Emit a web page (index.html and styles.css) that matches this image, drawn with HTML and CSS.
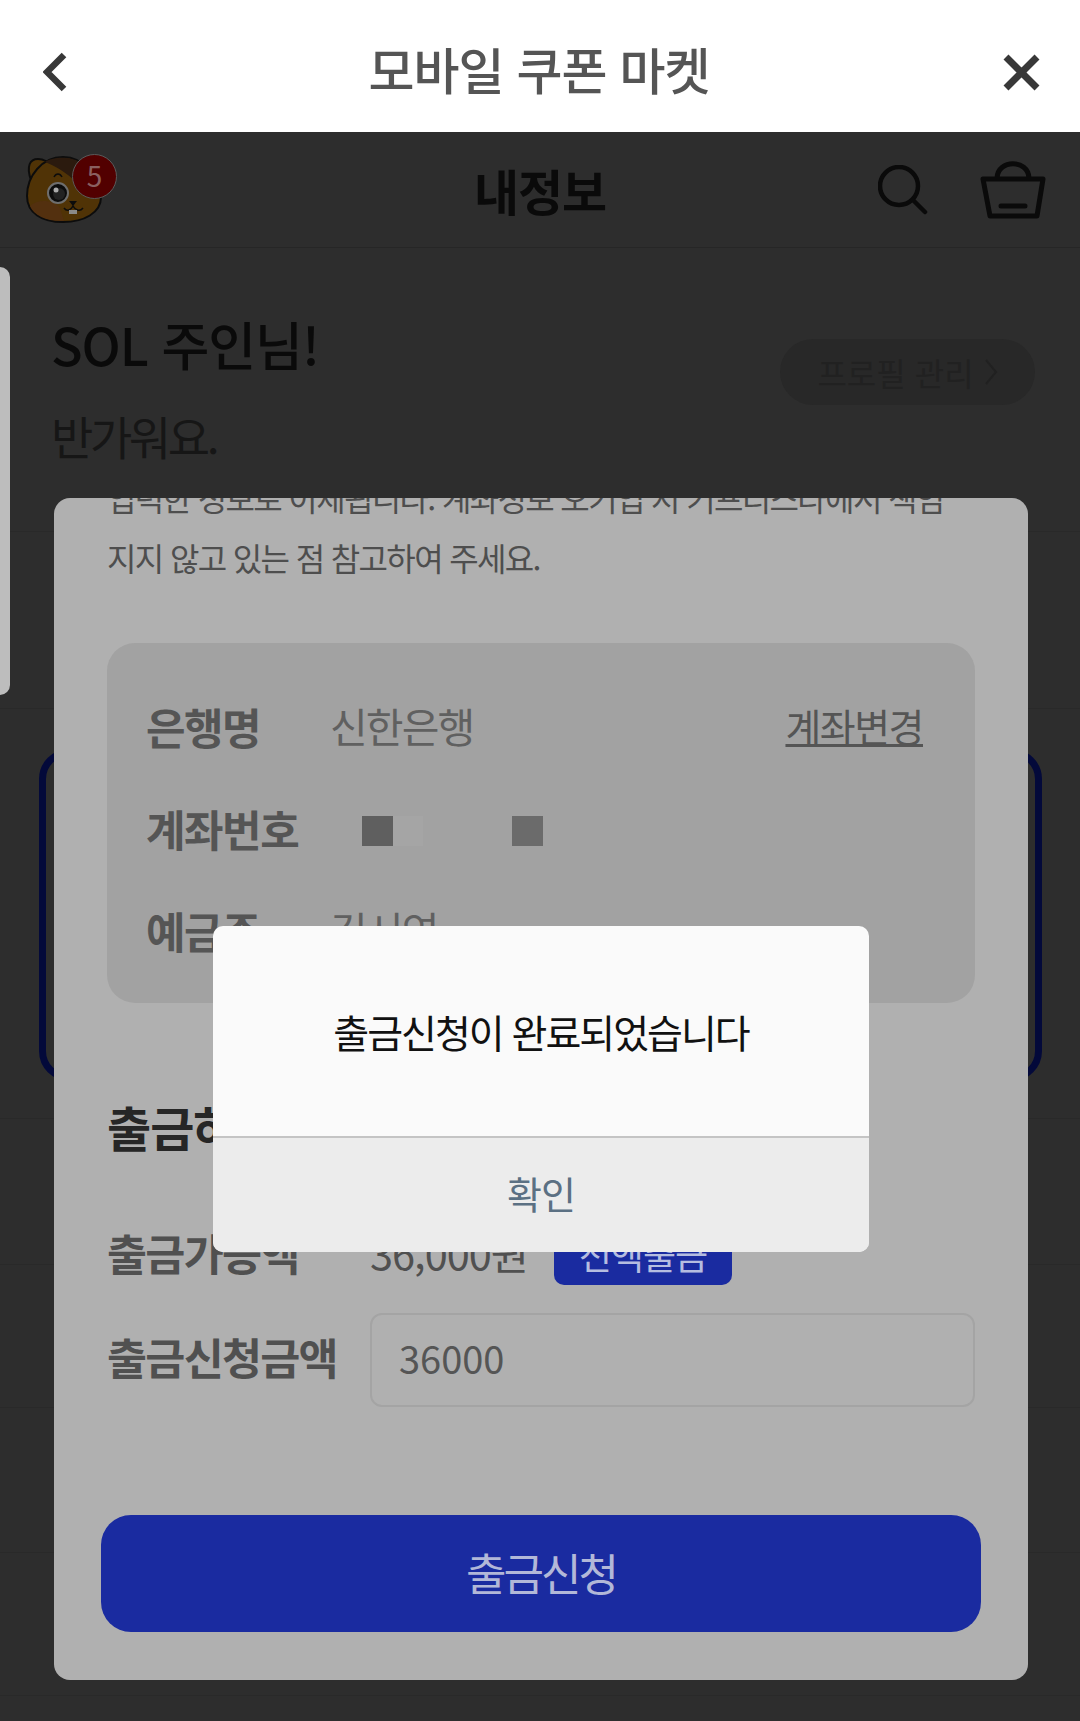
FILE: index.html
```html
<!DOCTYPE html>
<html lang="ko">
<head>
    <meta charset="UTF-8">
    <meta name="viewport" content="width=device-width, initial-scale=1.0">
    <title>모바일 쿠폰 마켓</title>
    <link rel="stylesheet" href="styles.css">
</head>
<body>
    <!-- 웹뷰 상단바 -->
    <div class="webview-bar">
        <svg class="back-icon" viewBox="0 0 24 40"><path d="M21 3 L4 20 L21 37" /></svg>
        <h1>모바일 쿠폰 마켓</h1>
        <svg class="close-icon" viewBox="0 0 37 37"><path d="M3 3 L34 34 M34 3 L3 34" /></svg>
    </div>

    <!-- 뒤에 깔린 페이지 -->
    <div class="page">
        <header class="page-header">
            <div class="mascot">
                <svg viewBox="0 0 76 68" width="76" height="68">
                    <path class="ear" d="M5 24 C0 10 4 3 12 3 C18 3 22 6 24 10 Z" />
                    <path class="face" d="M37 1 C58 1 75 22 75 41 C75 57 58 66 37 66 C16 66 1 57 1 40 C1 20 16 1 37 1 Z" />
                    <path class="blush" d="M4 50 C12 42 28 44 34 52 L38 65 C22 66 8 60 4 50 Z" />
                    <path class="hair" d="M19 6 C26 1 44 -1 58 8 L50 26 C42 18 30 10 19 6 Z" />
                    <path class="brow" d="M28 21 C30 17 34 17 36 21" />
                    <circle class="eye" cx="32" cy="37" r="10" />
                    <circle class="pupil" cx="33" cy="38" r="6" />
                    <circle class="eye-light" cx="30" cy="34" r="2.5" />
                    <path class="nose" d="M43 45 L51 45 L47 50 Z" />
                    <path class="brow" d="M38 52 C41 56 45 54 47 50 C49 54 54 56 57 52" />
                    <path class="teeth" d="M43 54 H51 V58 H43 Z" />
                </svg>
                <span class="badge">5</span>
            </div>
            <div class="page-title">내정보</div>
            <div class="header-icons">
                <svg class="search-icon" viewBox="0 0 50 50"><circle cx="21" cy="21" r="19" /><path d="M35 35 L47 47" /></svg>
                <svg class="basket-icon" viewBox="0 0 66 60"><path d="M3 19 H63 L57 56 H10 Z M17 18 C18 -1 48 -1 49 18 M21 46 H45" /></svg>
            </div>
        </header>
        <section class="greeting">
            <div>
                <div class="hello">SOL 주인님!</div>
                <div class="welcome">반가워요.</div>
            </div>
            <div class="profile-btn">프로필 관리<svg class="chevron" viewBox="0 0 14 28"><path d="M2 2 L12 14 L2 26" /></svg></div>
        </section>
        <div class="strip strip-a"></div>
        <div class="blue-box"></div>
        <div class="strip strip-b"></div>
        <div class="strip strip-c"></div>
        <div class="strip strip-d"></div>
        <div class="strip strip-e"></div>
        <div class="strip strip-f"></div>
    </div>
    <div class="side-tab"></div>

    <!-- 출금 모달 -->
    <div class="modal">
        <p class="notice notice-cut">입력한 정보로 이체됩니다. 계좌정보 오기입 시 기프티스타에서 책임</p>
        <p class="notice">지지 않고 있는 점 참고하여 주세요.</p>
        <div class="account">
            <div class="account-row">
                <span class="account-label">은행명</span>
                <span class="account-value">신한은행</span>
                <a class="account-change">계좌변경</a>
            </div>
            <div class="account-row">
                <span class="account-label">계좌번호</span>
                <span class="masked"><i class="dark"></i><i class="light"></i><i class="gap"></i><i class="mid"></i></span>
            </div>
            <div class="account-row">
                <span class="account-label">예금주</span>
                <span class="account-value">김서연</span>
            </div>
        </div>
        <h3>출금하기</h3>
        <div class="form-row row-available">
            <span class="form-label">출금가능액</span>
            <span class="amount">36,000원</span>
            <span class="all-btn">전액출금</span>
        </div>
        <div class="form-row row-request">
            <span class="form-label">출금신청금액</span>
            <div class="amount-input">36000</div>
        </div>
        <div class="submit">출금신청</div>
    </div>

    <!-- 완료 알림 -->
    <div class="alert">
        <div class="alert-msg">출금신청이 완료되었습니다</div>
        <div class="alert-btn">확인</div>
    </div>
</body>
</html>
```

FILE: styles.css
```css
* {
    box-sizing: border-box;
}

html, body {
    margin: 0;
    padding: 0;
}

body {
    width: 1080px;
    height: 1721px;
    overflow: hidden;
    position: relative;
    font-family: "Noto Sans CJK KR", "Noto Sans", sans-serif;
    background-color: #2d2d2d;
}

/* 상단바 */
.webview-bar {
    height: 132px;
    background-color: #fff;
    display: flex;
    align-items: center;
    justify-content: space-between;
    padding: 12px 40px 0 43px;
}

.webview-bar h1 {
    margin: -8px 0 0 8px;
    font-size: 50px;
    font-weight: 500;
    letter-spacing: -1px;
    color: #555;
}

.back-icon {
    width: 24px;
    height: 40px;
    fill: none;
    stroke: #383838;
    stroke-width: 6.5;
}

.close-icon {
    width: 37px;
    height: 37px;
    fill: none;
    stroke: #383838;
    stroke-width: 7;
}

/* 페이지 */
.page-header {
    height: 116px;
    border-bottom: 1px solid #262626;
    display: flex;
    align-items: center;
    justify-content: space-between;
    padding: 0 34px 0 26px;
    position: relative;
}

.mascot {
    position: relative;
    width: 92px;
    height: 68px;
}

.mascot svg {
    display: block;
}

.ear, .face {
    fill: #503306;
    stroke: #0c0c0c;
    stroke-width: 2;
}

.blush {
    fill: #53300f;
}

.hair {
    fill: #2b1a0e;
}

.brow {
    fill: none;
    stroke: #0c0c0c;
    stroke-width: 1.5;
}

.eye {
    fill: #0c0c0c;
    stroke: #6e6e6e;
    stroke-width: 2;
}

.pupil {
    fill: #222;
}

.eye-light {
    fill: #aaa;
}

.nose {
    fill: #0c0c0c;
}

.teeth {
    fill: #8a8a8a;
}

.badge {
    position: absolute;
    top: -2px;
    left: 46px;
    width: 45px;
    height: 45px;
    border-radius: 50%;
    background-color: #520000;
    border: 1px solid #5a5a5a;
    color: #8a6060;
    font-size: 28px;
    line-height: 41px;
    text-align: center;
}

.page-title {
    position: absolute;
    left: 0;
    right: 0;
    text-align: center;
    font-size: 49px;
    font-weight: 700;
    letter-spacing: -1px;
    color: #0a0a0a;
}

.header-icons {
    display: flex;
    align-items: center;
    gap: 52px;
}

.search-icon {
    width: 50px;
    height: 50px;
    fill: none;
    stroke: #0a0a0a;
    stroke-width: 4.5;
    stroke-linecap: round;
}

.basket-icon {
    width: 66px;
    height: 60px;
    fill: none;
    stroke: #0a0a0a;
    stroke-width: 5;
    stroke-linejoin: round;
    stroke-linecap: round;
}

.greeting {
    height: 284px;
    padding: 58px 45px 0 51px;
    display: flex;
    justify-content: space-between;
    border-bottom: 1px solid #292929;
}

.hello {
    font-size: 52px;
    font-weight: 500;
    letter-spacing: -1px;
    color: #0a0a0a;
    line-height: 76px;
}

.welcome {
    margin-top: 20px;
    font-size: 46px;
    letter-spacing: -3.4px;
    color: #161616;
    line-height: 66px;
}

.profile-btn {
    margin-top: 33px;
    width: 255px;
    height: 66px;
    border-radius: 33px;
    background-color: #282828;
    color: #212121;
    font-size: 32px;
    line-height: 62px;
    display: flex;
    align-items: center;
    justify-content: center;
    gap: 10px;
}

.chevron {
    width: 14px;
    height: 28px;
    fill: none;
    stroke: #212121;
    stroke-width: 2;
}

.strip {
    border-bottom: 1px solid #292929;
}

.strip-a {
    height: 177px;
}

.blue-box {
    margin: 40px 38px 0 39px;
    height: 332px;
    border: 7px solid #03093a;
    border-radius: 30px;
}

.strip-b {
    height: 38px;
}

.strip-c {
    height: 146px;
}

.strip-d {
    height: 143px;
}

.strip-e {
    height: 145px;
}

.strip-f {
    height: 143px;
}

.side-tab {
    position: absolute;
    left: -10px;
    top: 267px;
    width: 20px;
    height: 428px;
    background-color: #bdbdbd;
    border-radius: 10px;
}

/* 모달 */
.modal {
    position: absolute;
    left: 54px;
    top: 498px;
    width: 974px;
    height: 1182px;
    overflow: hidden;
    background-color: #b0b0b0;
    border-radius: 16px;
    padding: 0 53px;
}

.notice {
    margin: 0;
    font-size: 32px;
    line-height: 60px;
    letter-spacing: -1.65px;
    color: #4e4e4e;
    white-space: nowrap;
}

.notice-cut {
    margin-top: -31px;
}

.account {
    margin-top: 56px;
    height: 360px;
    border-radius: 28px;
    background-color: #a2a2a2;
    padding: 32px 52px 0 39px;
    overflow: hidden;
}

.account-row {
    display: flex;
    align-items: center;
    height: 102px;
}

.account-label {
    width: 184px;
    font-size: 43px;
    font-weight: 700;
    letter-spacing: -1.5px;
    color: #555;
    white-space: nowrap;
}

.account-value {
    margin-top: -3px;
    font-size: 41px;
    letter-spacing: -1.9px;
    color: #606060;
}

.account-change {
    margin-left: auto;
    margin-top: -2px;
    font-size: 39px;
    letter-spacing: -1.5px;
    color: #555;
    text-decoration: underline;
}

.masked {
    display: flex;
    margin: 6px 0 0 32px;
    height: 30px;
    filter: blur(0.6px);
}

.masked i {
    display: block;
    height: 30px;
}

.masked .dark {
    width: 31px;
    background-color: #5f5f5f;
}

.masked .light {
    width: 30px;
    background-color: #a5a5a5;
}

.masked .gap {
    width: 89px;
}

.masked .mid {
    width: 31px;
    background-color: #6b6b6b;
}

.modal h3 {
    margin: 88px 0 0;
    font-size: 48px;
    font-weight: 700;
    letter-spacing: -1px;
    line-height: 70px;
    color: #262626;
}

.form-row {
    display: flex;
    align-items: center;
    height: 94px;
}

.row-available {
    margin: 44px 0 14px;
}

.row-request .form-label {
    margin-top: -8px;
}

.form-label {
    width: 263px;
    font-size: 43.5px;
    font-weight: 700;
    letter-spacing: -1.7px;
    color: #505050;
    white-space: nowrap;
}

.amount {
    font-size: 41.5px;
    letter-spacing: -1px;
    color: #505050;
}

.all-btn {
    margin: 10px 0 0 26px;
    width: 178px;
    height: 56px;
    border-radius: 10px;
    background-color: #1a2ba0;
    color: #b5bde0;
    font-size: 36px;
    line-height: 50px;
    text-align: center;
    letter-spacing: -1px;
}

.amount-input {
    flex: 1;
    height: 94px;
    border: 2px solid #a4a4a4;
    border-radius: 12px;
    padding-left: 27px;
    font-size: 38px;
    line-height: 86px;
    color: #555;
}

.submit {
    margin: 108px -6px 0;
    height: 117px;
    border-radius: 30px;
    background-color: #1a2ba0;
    color: #b2b8d8;
    font-size: 44px;
    line-height: 114px;
    text-align: center;
    letter-spacing: -3px;
}

/* 알림 */
.alert {
    position: absolute;
    left: 213px;
    top: 926px;
    width: 656px;
    height: 326px;
    border-radius: 10px;
    overflow: hidden;
    background-color: #fafafa;
}

.alert-msg {
    height: 212px;
    display: flex;
    align-items: center;
    justify-content: center;
    border-bottom: 2px solid #c4c4c4;
    font-size: 39px;
    letter-spacing: -2px;
    color: #111;
}

.alert-btn {
    height: 114px;
    background-color: #ececec;
    color: #5b7083;
    font-size: 38px;
    line-height: 110px;
    text-align: center;
    letter-spacing: -1px;
}
```
